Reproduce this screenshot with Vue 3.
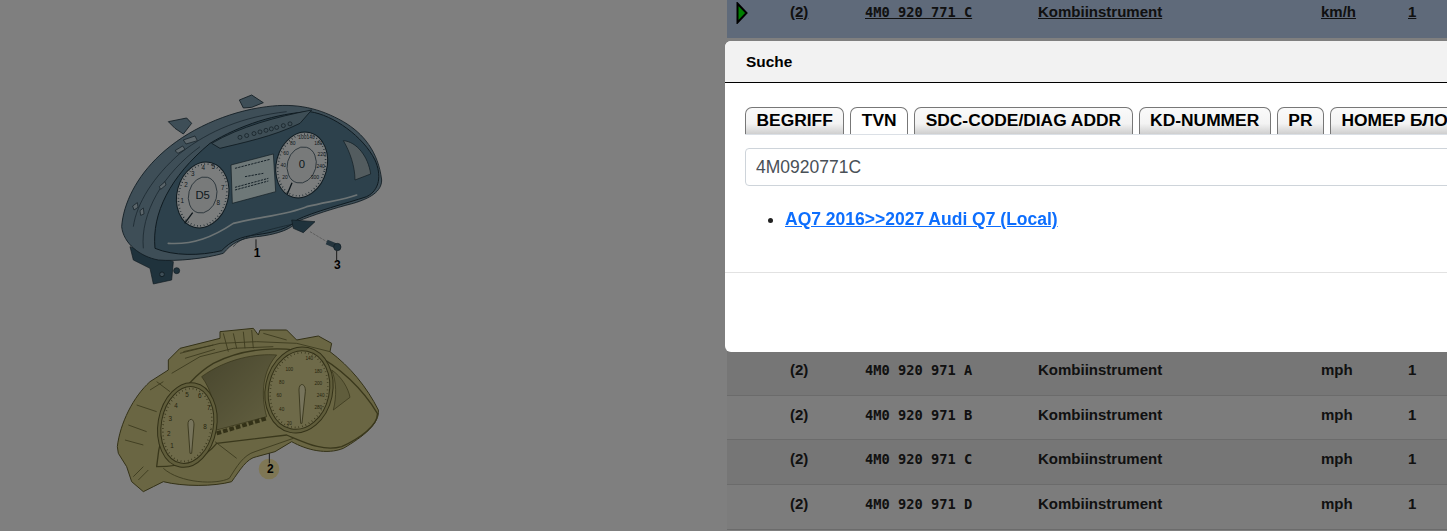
<script setup>
const tabs = ['BEGRIFF', 'TVN', 'SDC-CODE/DIAG ADDR', 'KD-NUMMER', 'PR', 'НОМЕР БЛОКА']
const lowerRows = ['A', 'B', 'C', 'D']

const leftDial1 = [[247,370,'1'],[258,322,'2'],[278,287,'3'],[310,270,'4'],[340,268,'5'],[368,330,'7'],[355,375,'8']]
const rightDial1 = [[555,297,'20'],[550,262,'40'],[558,225,'60'],[578,196,'80'],[607,176,'100'],[632,176,'140'],[655,195,'180'],[665,228,'220'],[662,264,'240'],[645,298,'300']]
const leftDial2 = [[216,415,'1'],[206,378,'2'],[211,333,'3'],[228,293,'4'],[261,260,'5'],[299,264,'6'],[326,300,'7'],[315,358,'8']]
const rightDial2 = [[568,345,'20'],[545,303,'40'],[537,262,'60'],[545,222,'80'],[568,183,'100'],[628,150,'140'],[655,190,'180'],[655,225,'200'],[662,262,'240'],[655,298,'280']]
const lamps = [420,440,462,480,498,514,530,550,570]
</script>

<template>
  <div class="page">
    <section class="figure">
      <svg class="drawing" viewBox="0 0 727 531" width="727" height="531">
        <defs>
          <linearGradient id="screenShade" x1="0" y1="0" x2="1" y2="1">
            <stop offset="0" stop-color="#908c5c" />
            <stop offset="1" stop-color="#c8c282" />
          </linearGradient>
        </defs>
        <!-- upper instrument cluster -->
        <g transform="translate(100 80) scale(.33333)">
          <path class="c1-rim" d="M205 125 L260 114 L275 130 L250 162 L225 145Z" />
          <path class="c1-rim" d="M418 60 L455 45 L490 68 L455 82 L430 84Z" />
          <path class="c1-dark" d="M90 500 L220 545 L215 600 L160 612 L150 565 L100 540Z" />
          <circle class="c1-dark" cx="230" cy="572" r="9" />
          <circle class="c1-rim" cx="186" cy="583" r="7" />
          <path class="c1-rim" d="M65 440 C70 370 110 290 180 225 C260 150 380 95 500 80 C590 68 660 85 730 125 C790 160 835 215 845 300 C845 335 810 355 760 370 C700 385 640 405 590 425 C575 450 520 465 470 470 C420 475 395 490 370 520 C320 535 230 545 175 540 C120 530 70 490 65 440Z" />
          <path class="c1-line" d="M100 440 C110 370 160 290 240 220 C330 150 430 110 560 95" />
          <path class="c1-line" d="M130 505 C120 400 190 280 300 200" />
          <path class="c1-pale" d="M225 212 L248 198 L255 208 L234 220Z M250 180 L285 168 L292 182 L258 192Z M178 320 L195 305 L198 315 L182 328Z M98 378 L112 368 L114 382 L102 390Z M120 392 L130 384 L132 402 L122 406Z" />
          <path class="c1-face" d="M165 505 C155 400 210 290 330 190 C420 135 530 100 630 95 C700 105 790 170 825 240 C845 285 840 330 800 350 C740 370 640 395 590 420 C570 445 520 458 470 464 C420 470 390 485 365 512 C300 528 220 528 165 505Z" />
          <path class="c1-band" d="M335 190 C420 140 530 110 635 90 L600 130 C520 170 420 190 360 205Z" />
          <circle v-for="x in lamps" :key="x" class="c1-lamp" :cx="x" :cy="172 - (x - 420) * .27" r="6" />
          <path class="c1-pane" d="M730 182 C770 185 805 230 812 282 L765 300 C765 260 750 215 730 182Z" />
          <ellipse class="dial" cx="308" cy="345" rx="77" ry="100" transform="rotate(15 308 345)" />
          <ellipse class="dial-ticks" cx="308" cy="345" rx="71" ry="94" transform="rotate(15 308 345)" />
          <ellipse class="dial-ring" cx="308" cy="345" rx="42" ry="55" transform="rotate(15 308 345)" />
          <ellipse class="dial" cx="605" cy="255" rx="76" ry="100" transform="rotate(15 605 255)" />
          <ellipse class="dial-ticks" cx="605" cy="255" rx="70" ry="94" transform="rotate(15 605 255)" />
          <ellipse class="dial-ring" cx="605" cy="255" rx="43" ry="55" transform="rotate(15 605 255)" />
          <path class="needle" d="M278 398 L254 430 M576 308 L562 342" />
          <text v-for="n in leftDial1" :key="n[2]" class="dial-num" :x="n[0]" :y="n[1]">{{ n[2] }}</text>
          <text v-for="n in rightDial1" :key="n[2]" class="dial-num small" :x="n[0]" :y="n[1]">{{ n[2] }}</text>
          <text class="dial-big" x="308" y="357">D5</text>
          <text class="dial-big" x="606" y="263">0</text>
          <path class="c1-screen" d="M393 255 L520 222 L527 335 L397 370Z" />
          <path class="screen-ink" d="M405 265 L510 238 M435 290 L490 280 M405 322 L505 295 M405 330 L505 303" />
          <path class="c1-strip" d="M205 490 C280 495 340 470 400 430 C480 410 560 405 620 380 C680 365 730 360 770 345" />
          <path class="c1-line" d="M400 500 C420 470 500 450 580 432" />
          <path class="c1-dark" d="M575 420 L645 425 L610 458 L580 445Z" />
          <path class="leader dash" d="M630 455 L682 486" />
          <path class="bolt" d="M680 486 L706 497" />
          <circle class="c1-dark" cx="712" cy="501" r="11" />
          <path class="leader" d="M468 478 L468 505 M710 512 L710 540" />
          <text class="callout" x="471" y="531">1</text>
          <text class="callout" x="712" y="566">3</text>
        </g>

        <!-- lower instrument cluster -->
        <g transform="translate(100 310) scale(.33333)">
          <path class="c2-body" d="M52 410 C60 340 100 260 150 215 L205 180 L205 150 L240 115 L360 85 L360 65 L460 55 L475 75 L480 60 L560 60 L590 90 L655 78 L695 100 L690 125 C750 170 800 230 835 300 C840 340 790 380 730 415 C680 435 620 420 575 395 L525 425 L470 440 C440 445 420 480 395 515 C340 530 250 530 190 515 L160 530 L130 545 L95 515 L80 470 L55 430Z" />
          <path class="c2-line" d="M240 130 L360 100 L470 95 L590 100 L690 125 M215 190 L300 140 L400 115 L520 110 M370 70 L385 125 M400 70 L410 115 M430 65 L435 115 M455 60 L460 115 M490 70 L560 90 M250 125 L340 105 M255 145 L345 118 M110 285 L170 305 M85 345 L140 365 M75 390 L130 405 M100 500 L130 470 M115 510 L145 480 M150 240 L190 215 M170 215 L210 245" />
          <path class="c2-screen" d="M305 200 C380 145 470 130 530 135 C490 180 480 250 500 320 L350 360 C350 300 335 240 305 200Z" />
          <path class="c2-line thick" d="M170 470 C180 340 240 220 340 160 C430 115 540 105 640 130 C720 170 790 240 832 310 C835 345 780 385 725 410 C670 425 620 400 560 375 L350 400 C310 450 250 470 170 470Z" />
          <path class="c2-line" d="M190 475 C240 520 350 525 388 505 C410 470 430 435 465 425 L580 385" />
          <path class="c2-line" d="M345 395 L410 445" />
          <path class="c2-pane" d="M695 180 C725 200 745 235 750 262 L700 300 C710 260 710 215 695 180Z" />
          <ellipse class="c2-dial" cx="262" cy="345" rx="88" ry="128" transform="rotate(10 262 345)" />
          <ellipse class="c2-face" cx="262" cy="345" rx="78" ry="116" transform="rotate(10 262 345)" />
          <ellipse class="c2-ticks" cx="262" cy="345" rx="72" ry="110" transform="rotate(10 262 345)" />
          <ellipse class="c2-dial" cx="597" cy="240" rx="101" ry="130" transform="rotate(12 597 240)" />
          <ellipse class="c2-face" cx="597" cy="240" rx="91" ry="119" transform="rotate(12 597 240)" />
          <ellipse class="c2-ticks" cx="597" cy="240" rx="85" ry="113" transform="rotate(12 597 240)" />
          <path class="c2-strip" d="M350 370 L500 325" />
          <text v-for="n in leftDial2" :key="n[2]" class="c2-num" :x="n[0]" :y="n[1]">{{ n[2] }}</text>
          <text v-for="n in rightDial2" :key="n[2]" class="c2-num small" :x="n[0]" :y="n[1]">{{ n[2] }}</text>
          <path class="c2-needle" d="M264 345 C262 325 282 320 282 345 L275 430 L270 430Z" />
          <path class="c2-needle" d="M597 240 C597 215 618 220 616 245 L606 340 L602 340Z" />
          <circle class="badge" cx="507" cy="477" r="31" />
          <path class="leader" d="M508 430 L508 460" />
          <text class="callout" x="511" y="490">2</text>
        </g>
      </svg>
    </section>

    <section class="parts">
      <div class="row selected">
        <span class="marker">
          <svg viewBox="0 0 12 22" width="12" height="22"><path class="arrow" d="M1.5 1.5 L10.5 11 L1.5 20.5Z" /></svg>
        </span>
        <a class="cell">(2)</a>
        <a class="cell mono">4M0 920 771 C</a>
        <a class="cell">Kombiinstrument</a>
        <a class="cell">km/h</a>
        <a class="cell">1</a>
      </div>
      <div class="covered"></div>
      <div v-for="letter in lowerRows" :key="letter" class="row">
        <span class="marker"></span>
        <span class="cell">(2)</span>
        <span class="cell mono">4M0 920 971 {{ letter }}</span>
        <span class="cell">Kombiinstrument</span>
        <span class="cell">mph</span>
        <span class="cell">1</span>
      </div>
    </section>

    <div class="backdrop"></div>

    <div class="modal">
      <header class="modal-head">Suche</header>
      <div class="modal-body">
        <nav class="tabs">
          <span v-for="tab in tabs" :key="tab" class="tab" :class="{ active: tab === 'TVN' }">{{ tab }}</span>
        </nav>
        <input class="search" type="text" value="4M0920771C" />
        <ul class="results">
          <li><a class="result" href="#">AQ7 2016&gt;&gt;2027 Audi Q7 (Local)</a></li>
        </ul>
      </div>
      <footer class="modal-foot"></footer>
    </div>
  </div>
</template>

<style>
html, body { margin: 0; overflow: hidden; }
</style>

<style scoped>
.page {
  display: flex;
  width: 1447px;
  height: 531px;
  overflow: hidden;
  background: #fff;
  font-family: "Liberation Sans", Arial, sans-serif;
  color: #222;
}
.figure { flex: 0 0 727px; height: 531px; }
.drawing { display: block; }

.parts { flex: 1; margin-top: -7px; font-size: 15px; font-weight: 700; }
.row {
  display: grid;
  grid-template-columns: 63px 75px 173px 283px 87px 1fr;
  box-sizing: border-box;
  height: 44.67px;
  padding-top: 11px;
  line-height: 16px;
  border-bottom: 1px solid #d6d6d6;
  background: #f9f9f9;
}
.row:nth-of-type(odd) { background: #ececec; }
.row.selected { background: #bed4f4; border-bottom: 0; height: 45px; }
.covered { height: 313px; }
.cell { color: #222; }
.selected .cell { text-decoration: underline; }
.mono { font-family: "DejaVu Sans Mono", "Liberation Mono", monospace; font-size: 13.7px; }
.marker { position: relative; }
.marker svg { position: absolute; left: 9px; top: -2px; }
.arrow { fill: #0f0; stroke: #000; stroke-width: 2; }

.backdrop { position: fixed; inset: 0; background: rgba(0, 0, 0, .5); }

.modal {
  position: absolute;
  left: 725px;
  top: 41px;
  width: 800px;
  height: 311px;
  display: flex;
  flex-direction: column;
  box-sizing: border-box;
  background: #fff;
  border-radius: 6px;
  overflow: hidden;
}
.modal-head {
  box-sizing: border-box;
  height: 42px;
  padding: 11px 21px;
  background: #f2f2f2;
  border-bottom: 1px solid #000;
  font-size: 15.4px;
  font-weight: 700;
  line-height: 19px;
  color: #000;
}
.modal-body { flex: 1; padding: 24px 20px 0; border-bottom: 1px solid #e2e2e2; }
.modal-foot { height: 79px; }
.tabs {
  display: flex;
  gap: 6px;
  height: 27px;
  border-bottom: 1px solid #dbe0e6;
  white-space: nowrap;
}
.tab {
  box-sizing: border-box;
  height: 27px;
  padding: 1px 10.5px 0;
  border: 1px solid #777;
  border-bottom: 0;
  border-radius: 7px 7px 0 0;
  background: linear-gradient(#fafafa 0%, #f3f3f3 60%, #cfcfcf 100%);
  font-size: 17.4px;
  font-weight: 700;
  line-height: 22px;
  color: #000;
}
.tab.active { background: #fff; }
.search {
  display: block;
  box-sizing: border-box;
  width: 760px;
  height: 38px;
  margin-top: 13px;
  padding: 0 10px;
  border: 1px solid #ced4da;
  border-radius: 4px;
  font: 17.5px "Liberation Sans", Arial, sans-serif;
  color: #495057;
  outline: 0;
}
.results { margin: 21px 0 0; padding: 0 0 0 40px; font-size: 17.5px; line-height: 24px; }
.result { color: #0d6efd; font-weight: 700; }

/* drawing fills */
.c1-rim { fill: #7c9cae; stroke: #1e3440; stroke-width: 2.5; }
.c1-dark { fill: #3e6478; stroke: #1e3440; stroke-width: 2; }
.c1-face { fill: #5a8398; stroke: #1e3440; stroke-width: 3; }
.c1-band { fill: #7c9cac; stroke: #1e3440; stroke-width: 2.5; }
.c1-lamp { fill: none; stroke: #1e3440; stroke-width: 2; }
.c1-pane { fill: #a6b8be; stroke: #1e3440; stroke-width: 2; }
.c1-pale { fill: #b8ccd6; stroke: #1e3440; stroke-width: 2; }
.c1-line { fill: none; stroke: #27404e; stroke-width: 2; }
.c1-screen { fill: #dcf0f0; stroke: #1e3440; stroke-width: 2; }
.c1-strip { fill: none; stroke: #dbe8ea; stroke-width: 5; stroke-linecap: round; }
.screen-ink { fill: none; stroke: #2c4350; stroke-width: 3; stroke-dasharray: 7 3; }
.dial { fill: #f6fafa; stroke: #1e3440; stroke-width: 3; }
.dial-ticks { fill: none; stroke: #27404e; stroke-width: 5; stroke-dasharray: 2 8; }
.dial-ring { fill: #f0f4f4; stroke: #27404e; stroke-width: 2; }
.needle { fill: none; stroke: #1a2c36; stroke-width: 4; }
.dial-num, .dial-big, .c2-num {
  font-family: "Liberation Sans", Arial, sans-serif;
  text-anchor: middle;
  fill: #1e3440;
}
.dial-num { font-size: 19px; }
.dial-num.small { font-size: 15px; }
.dial-big { font-size: 34px; }
.callout {
  font-family: "Liberation Sans", Arial, sans-serif;
  font-size: 36px;
  font-weight: 700;
  text-anchor: middle;
  fill: #000;
}
.leader { fill: none; stroke: #333; stroke-width: 3; }
.leader.dash { stroke: #bbb; stroke-dasharray: 8 3; }
.bolt { fill: none; stroke: #4a6a7c; stroke-width: 15; }

.c2-body { fill: #d4cc86; stroke: #66622f; stroke-width: 3; }
.c2-screen { fill: url(#screenShade); stroke: #66622f; stroke-width: 2; }
.c2-line { fill: none; stroke: #747038; stroke-width: 2.5; }
.c2-line.thick { stroke-width: 4; }
.c2-pane { fill: #c0ba78; stroke: #66622f; stroke-width: 2; }
.c2-dial { fill: #c0ba76; stroke: #66622f; stroke-width: 3; }
.c2-face { fill: #dcd492; stroke: #66622f; stroke-width: 3; }
.c2-ticks { fill: none; stroke: #66622f; stroke-width: 5; stroke-dasharray: 2 9; }
.c2-strip { fill: none; stroke: #66622f; stroke-width: 12; stroke-dasharray: 14 6; }
.c2-num { font-size: 19px; fill: #4e4a20; }
.c2-num.small { font-size: 14px; }
.c2-needle { fill: #eee8b8; stroke: #66622f; stroke-width: 2.5; }
.badge { fill: #ffeeaa; }
</style>
